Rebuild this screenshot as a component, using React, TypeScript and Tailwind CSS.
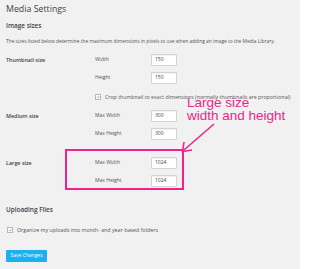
import React from "react"

const font = { fontFamily: '"Open Sans", "Noto Sans", sans-serif' }

function Field({ label, value, top }: { label: string; value: string; top: string }) {
  return (
    <div className={`flex items-center h-[12px] ${top}`}>
      <div className="w-[56px] text-[5px] text-[#555]">{label}</div>
      <div className="w-[26px] h-[12px] bg-white border border-[#d4d4d4] rounded-[1px] shadow-[inset_0_1px_1px_rgba(0,0,0,0.06)] flex items-center pl-[3px] text-[5px] text-[#444]">
        {value}
      </div>
    </div>
  )
}

function Check({ children, size }: { children: React.ReactNode; size: string }) {
  return (
    <div className="flex items-center h-[6px]">
      <div className="w-[6px] h-[6px] bg-white border border-[#b4b9be] flex items-center justify-center">
        <svg viewBox="0 0 10 10" className="w-[6px] h-[6px]">
          <path d="M2 5.2 L4.2 7.3 L8.3 2.6" fill="none" stroke="#1e8cbe" strokeWidth="1.6" />
        </svg>
      </div>
      <span className={`ml-[4px] leading-[4px] text-[#555] whitespace-nowrap ${size}`}>{children}</span>
    </div>
  )
}

export default function App() {
  return (
    <div className="relative w-[300px] h-[269px] overflow-hidden bg-[#f1f1f1]" style={font}>
      <div className="flex flex-col px-[6px] pt-[3px]">
        <h1 className="h-[13px] leading-[13px] text-[8.8px] text-[#3c434a]">Media Settings</h1>
        <h2 className="mt-[5px] h-[9px] leading-[9px] text-[6.4px] font-semibold text-[#3c434a]">Image sizes</h2>
        <p className="mt-[8px] h-[6px] leading-[6px] text-[4.85px] text-[#555] whitespace-nowrap">
          The sizes listed below determine the maximum dimensions in pixels to use when adding an image to the Media Library.
        </p>

        <div className="flex mt-[10px]">
          <div className="w-[89px] h-[12px] flex items-center text-[5.4px] font-semibold text-[#3c434a]">Thumbnail size</div>
          <div className="flex flex-col">
            <Field label="Width" value="150" top="" />
            <Field label="Height" value="150" top="mt-[6px]" />
            <div className="mt-[10px] h-[6px] flex items-center">
              <Check size="text-[5.25px]">Crop thumbnail to exact dimensions (normally thumbnails are proportional)</Check>
            </div>
          </div>
        </div>

        <div className="flex mt-[10px]">
          <div className="w-[89px] h-[12px] flex items-center text-[5.4px] font-semibold text-[#3c434a]">Medium size</div>
          <div className="flex flex-col">
            <Field label="Max Width" value="300" top="" />
            <Field label="Max Height" value="300" top="mt-[6px]" />
          </div>
        </div>

        <div className="flex mt-[17px]">
          <div className="w-[89px] h-[12px] flex items-center text-[5.4px] font-semibold text-[#3c434a]">Large size</div>
          <div className="flex flex-col">
            <Field label="Max Width" value="1024" top="" />
            <Field label="Max Height" value="1024" top="mt-[6px]" />
          </div>
        </div>

        <h2 className="mt-[18px] h-[9px] leading-[9px] text-[6.4px] font-semibold text-[#3c434a]">Uploading Files</h2>
        <div className="mt-[13px] pl-[1px]">
          <Check size="text-[5.3px]">Organize my uploads into month- and year-based folders</Check>
        </div>
        <div className="mt-[17px]">
          <button className="h-[12px] w-[41px] bg-[#1ab1f2] text-white text-[5px] rounded-[1px] flex items-center justify-center">
            Save Changes
          </button>
        </div>
      </div>

      {/* annotation */}
      <div className="absolute left-[65px] top-[149px] w-[119px] h-[41px] border-2 border-[#f0238e]" />
      <div
        className="absolute left-[187px] top-[98px] text-[13.5px] leading-[9px] text-[#f0238e]"
        style={{ fontFamily: '"Liberation Sans", Arial, sans-serif' }}
      >
        <div>Large size</div>
        <div className="mt-[4px]">width and height</div>
      </div>
      <svg className="absolute left-0 top-0 w-[300px] h-[269px] pointer-events-none" viewBox="0 0 300 269">
        <path d="M214 124 L184 150" stroke="#f0238e" strokeWidth="1.6" fill="none" />
        <path d="M184 142 L182.5 151.5 L192 150" stroke="#f0238e" strokeWidth="1.6" fill="none" />
      </svg>
    </div>
  )
}
